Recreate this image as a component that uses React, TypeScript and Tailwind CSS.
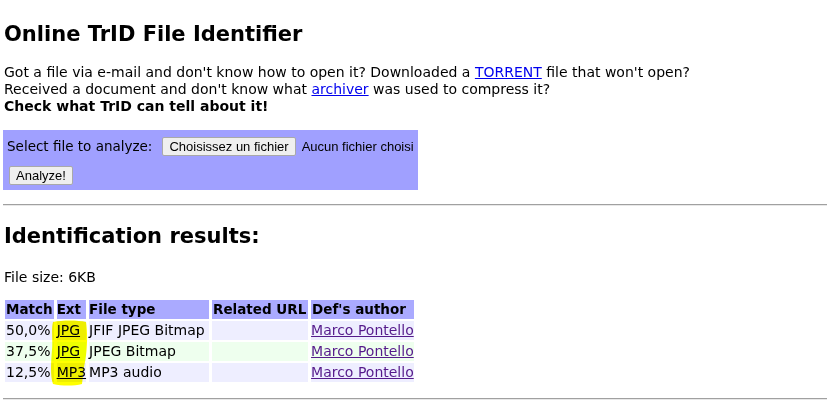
import React from 'react';

const rows = [
  { match: '50,0%', ext: 'JPG', type: 'JFIF JPEG Bitmap', bg: 'bg-[#eeeeff]' },
  { match: '37,5%', ext: 'JPG', type: 'JPEG Bitmap', bg: 'bg-[#eeffee]' },
  { match: '12,5%', ext: 'MP3', type: 'MP3 audio', bg: 'bg-[#eeeeff]' },
];

function Rule() {
  return <div className="h-[2px] w-full border-t border-t-[#a0a0a0] border-b border-b-[#e8e8e8]" />;
}

export default function App() {
  return (
    <div className="relative min-h-[401px] bg-white pl-[3px] font-['DejaVu_Sans',sans-serif] text-[14px] leading-[17px] text-black">
      <h1 className="pl-px pt-[20px] text-[21px] font-bold leading-[28px]">Online TrID File Identifier</h1>

      <p className="mt-[16px] pl-px">
        Got a file via e-mail and don't know how to open it? Downloaded a{' '}
        <a href="#" className="text-[#0000ee] underline">TORRENT</a> file that won't open?
        <br />
        Received a document and don't know what{' '}
        <a href="#" className="text-[#0000ee] underline">archiver</a> was used to compress it?
        <br />
        <b>Check what TrID can tell about it!</b>
      </p>

      {/* Upload form */}
      <div className="mt-[15px] w-[415px] bg-[#a0a0ff] px-[4px] pt-[7px] pb-[5px]">
        <div className="flex items-center">
          <span className="text-[13.5px]">Select file to analyze:</span>
          <div className="ml-[10px] flex items-center font-['Liberation_Sans',sans-serif] text-[13px]">
            <button className="h-[19px] rounded-[2px] border border-[#a9a9a9] bg-[#efefef] px-[6px] leading-[17px]">
              Choisissez un fichier
            </button>
            <span className="ml-[6px] whitespace-nowrap">Aucun fichier choisi</span>
          </div>
        </div>
        <button className="mt-[10px] ml-[2px] h-[19px] rounded-[2px] border border-[#a9a9a9] bg-[#efefef] px-[6px] font-['Liberation_Sans',sans-serif] text-[13px] leading-[17px]">
          Analyze!
        </button>
      </div>

      <div className="mt-[14px]">
        <Rule />
      </div>

      <h2 className="mt-[16px] pl-px text-[21px] font-bold leading-[28px]">Identification results:</h2>

      <p className="mt-[19px] pl-px">File size: 6KB</p>

      {/* Results */}
      <table className="mt-[12px] -ml-[1px] table-fixed border-separate border-spacing-x-[3px] border-spacing-y-[2px]">
        <colgroup>
          <col className="w-[48px]" />
          <col className="w-[29px]" />
          <col className="w-[120px]" />
          <col className="w-[96px]" />
          <col className="w-[103px]" />
        </colgroup>
        <thead>
          <tr className="bg-[#aaaaff] text-[13.5px] font-bold">
            <td className="h-[19px] px-[1px] whitespace-nowrap">Match</td>
            <td className="px-0 whitespace-nowrap">Ext</td>
            <td className="px-0 whitespace-nowrap">File type</td>
            <td className="px-px whitespace-nowrap">Related URL</td>
            <td className="px-px whitespace-nowrap">Def's author</td>
          </tr>
        </thead>
        <tbody>
          {rows.map((r, i) => (
            <tr key={i} className={r.bg}>
              <td className="h-[19px] px-[1px] whitespace-nowrap">{r.match}</td>
              <td className="px-0 whitespace-nowrap">
                <a href="#" className="underline">{r.ext}</a>
              </td>
              <td className="px-0 whitespace-nowrap">{r.type}</td>
              <td className="px-px"></td>
              <td className="px-0 whitespace-nowrap">
                <a href="#" className="text-[#551a8b] underline">Marco Pontello</a>
              </td>
            </tr>
          ))}
        </tbody>
      </table>

      <div className="mt-[14px]">
        <Rule />
      </div>

      {/* highlighter mark over the Ext column */}
      <svg className="pointer-events-none absolute left-0 top-0 mix-blend-multiply" width="827" height="401">
        <path
          d="M53 322 C62 320 78 320 86 322 C88 334 87 352 85 362 C83 370 83 378 82 384 C74 386 62 386 53 384 C50 376 51 362 52 350 C53 340 51 330 53 322 Z"
          fill="#ffff00"
        />
      </svg>
    </div>
  );
}
